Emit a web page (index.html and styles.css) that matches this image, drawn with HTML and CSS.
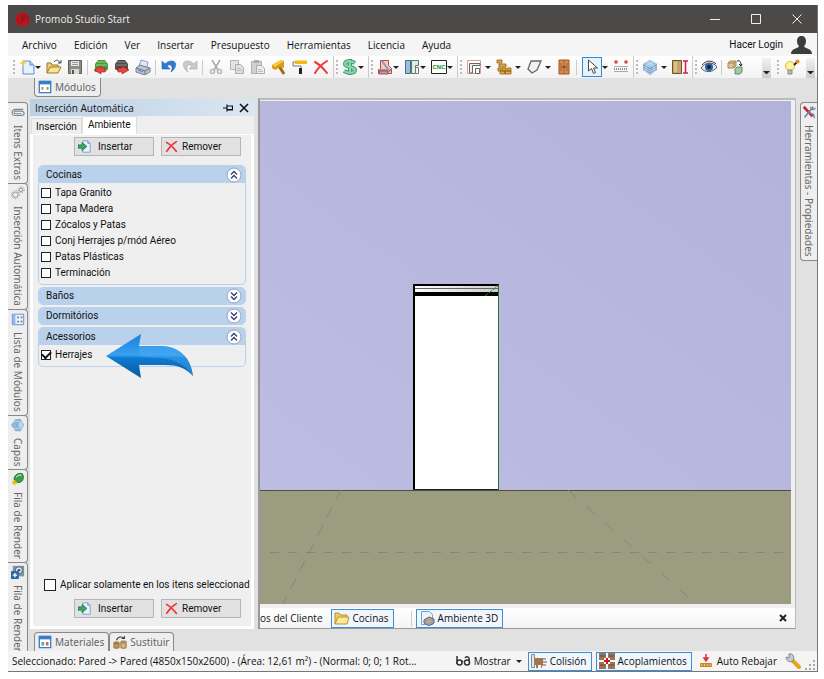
FILE: index.html
```html
<!DOCTYPE html>
<html lang="es">
<head>
    <meta charset="utf-8">
    <title>Promob Studio Start</title>
    <link rel="stylesheet" href="styles.css">
</head>
<body>
    <!-- icons used more than once -->
    <svg width="0" height="0" class="defs" aria-hidden="true">
        <symbol id="i-insert" viewBox="0 0 16 16">
            <path d="M6 1h6l3 3v11H6z" fill="#eaf3fd" stroke="#6f95c4"/>
            <path d="M12 1v3h3" fill="#a8c8ee" stroke="#6f95c4"/>
            <path d="M0 6h5V3l6 5-6 5v-3H0z" fill="#3aa66c" stroke="#1e7a4a"/>
        </symbol>
        <symbol id="i-remove" viewBox="0 0 16 16">
            <path d="M2 3c4 2 8 6 12 11M14 2C9 5 5 9 2 14" fill="none" stroke="#f0343c" stroke-width="2" stroke-linecap="round"/>
        </symbol>
        <symbol id="i-up" viewBox="0 0 16 16">
            <circle cx="8" cy="8" r="7" fill="#fff" stroke="#8fa3c8"/>
            <path d="M5 7.500l3-3 3 3M5 11.500l3-3 3 3" fill="none" stroke="#2c3f78" stroke-width="1.300"/>
        </symbol>
        <symbol id="i-down" viewBox="0 0 16 16">
            <circle cx="8" cy="8" r="7" fill="#fff" stroke="#8fa3c8"/>
            <path d="M5 4.500l3 3 3-3M5 8.500l3 3 3-3" fill="none" stroke="#2c3f78" stroke-width="1.300"/>
        </symbol>
        <symbol id="i-layers" viewBox="0 0 16 16">
            <path d="M1 5l7-4 7 4v6l-7 5-7-5z" fill="#6f9fce"/>
            <path d="M1 5l7-4 7 4-7 4z" fill="#a9c8e6"/>
            <path d="M1 7l7 4 7-4M1 9l7 4 7-4M1 11l7 4 7-4M5 3l7 4v6M11 3L4 7v6" fill="none" stroke="#d4e5f5" stroke-width=".7"/>
        </symbol>
    </svg>

    <div class="window">
        <header class="titlebar">
            <svg class="logo" viewBox="0 0 16 16">
                <circle cx="8" cy="8" r="7.500" fill="#c8101c"/>
                <path d="M7 3c5 0 6 4 3 6-2 1-2 2-3 4-1-4-1-7 0-10z" fill="#8a1a20"/>
                <path d="M4 4c-2 3-1 7 2 9M9 2c4 0 6 5 4 8" fill="none" stroke="#7a1a1e"/>
            </svg>
            <h1 class="title">Promob Studio Start</h1>
            <button class="win-btn" aria-label="Minimizar"><svg viewBox="0 0 10 10"><path d="M0 5.500h10"/></svg></button>
            <button class="win-btn" aria-label="Maximizar"><svg viewBox="0 0 10 10"><path d="M.5 .5h9v9h-9z"/></svg></button>
            <button class="win-btn" aria-label="Cerrar"><svg viewBox="0 0 10 10"><path d="M.5 .5l9 9M9.500 .5l-9 9"/></svg></button>
        </header>

        <nav class="menubar">
            <button>Archivo</button>
            <button>Edición</button>
            <button>Ver</button>
            <button>Insertar</button>
            <button>Presupuesto</button>
            <button>Herramientas</button>
            <button>Licencia</button>
            <button>Ayuda</button>
            <a class="login" href="#">Hacer Login
                <svg viewBox="0 0 21 18"><path d="M6 5c0-7 9-7 9 0 0 3-1 4-2 5 1 3 8 2 8 8H0c0-6 7-5 8-8-1-1-2-2-2-5z" fill="#3c3c3c"/></svg>
            </a>
        </nav>

        <div class="toolbar">
            <div class="group">
                <i class="grip"></i>
                <button class="tool drop" aria-label="Nuevo"><svg viewBox="0 0 16 16"><path d="M4 2h7l4 4v9H4z" fill="#e6f1fd" stroke="#5b8fd0"/><path d="M11 2v4h4" fill="#b5d3f4" stroke="#5b8fd0"/><path d="M4 0l1 3 3 1-3 1-1 3-1-3-3-1 3-1z" fill="#f7cf3c"/></svg></button>
                <button class="tool" aria-label="Abrir"><svg viewBox="0 0 16 16"><path d="M1 14V4h4l1 2h6v3" fill="#f0cf6e" stroke="#9c7a28"/><path d="M1 14l3-6h11l-3 6z" fill="#fbe39a" stroke="#9c7a28"/><path d="M8 3c2-3 5-2 6 1m1-3v3h-3" fill="none" stroke="#444"/></svg></button>
                <button class="tool" aria-label="Guardar"><svg viewBox="0 0 16 16"><path d="M1.500 1.500h13v13h-13z" fill="#8a8d88" stroke="#5c5f5a"/><path d="M4 2h8v5H4z" fill="#e9ece6"/><path d="M5 3.500h6M5 5.500h6" stroke="#999"/><path d="M4 10h8v5H4z" fill="#d8dad6"/><path d="M5 11h2v4H5z" fill="#555"/></svg></button>
                <i class="sep"></i>
                <button class="tool" aria-label="Importar"><svg viewBox="0 0 16 16"><path d="M2 5l3-4h7l3 4v5l-3 3H2z" fill="#4b9a3a"/><path d="M4 3h9M3 6h11" stroke="#9ad486"/><path d="M8 15v-2h4V9H8V7l-7 4z" fill="#e8453c" stroke="#a31d18" stroke-width=".6"/></svg></button>
                <button class="tool" aria-label="Exportar"><svg viewBox="0 0 16 16"><path d="M1 5l3-4h7l3 4v7H4l-3-2z" fill="#4c4c4c"/><path d="M3 3h9M2 6h11" stroke="#8b8b8b"/><path d="M8 15v-2H4V9h4V7l7 4z" fill="#e8453c" stroke="#a31d18" stroke-width=".6"/></svg></button>
                <button class="tool" aria-label="Imprimir"><svg viewBox="0 0 16 16"><path d="M4 7l2-6 7 2-1 5z" fill="#dcebfa" stroke="#8aa3c0"/><path d="M1 9l4-3 10 3v4l-5 3-9-3z" fill="#bcc2cc" stroke="#7b838f"/><path d="M1 9l9 3 5-3M10 12v4" stroke="#6f7783" fill="none"/><path d="M3 11l5 2" stroke="#4d8fd6"/></svg></button>
                <i class="sep"></i>
                <button class="tool" aria-label="Deshacer"><svg viewBox="0 0 16 16"><path d="M1 2v8h8L6 7c3-3 7 0 4 6 6-4 6-11 1-11C8 2 6 3 4 5z" fill="#2e7ad6" stroke="#1d5fb4" stroke-width=".6"/></svg></button>
                <button class="tool" aria-label="Rehacer"><svg viewBox="0 0 16 16"><path d="M15 2v8H7l3-3C7 4 3 7 6 13 0 9 0 2 5 2c3 0 5 1 7 3z" fill="#c9c9c9" stroke="#a8a8a8" stroke-width=".6"/></svg></button>
                <i class="sep"></i>
                <button class="tool" aria-label="Cortar"><svg viewBox="0 0 16 16"><path d="M4 1l6 10M12 1L6 11" stroke="#a9a9a9" stroke-width="1.500"/><circle cx="4.500" cy="12.500" r="2" fill="none" stroke="#b5b5b5" stroke-width="1.500"/><circle cx="11.500" cy="12.500" r="2" fill="none" stroke="#b5b5b5" stroke-width="1.500"/></svg></button>
                <button class="tool" aria-label="Copiar"><svg viewBox="0 0 16 16"><path d="M1.500 1.500h8v9h-8z" fill="#e4e4e4" stroke="#b2b2b2"/><path d="M6.500 5.500h5l3 3v6h-8z" fill="#e0e0e0" stroke="#ababab"/><path d="M8 9.500h4M8 11.500h5" stroke="#bbb"/></svg></button>
                <button class="tool" aria-label="Pegar"><svg viewBox="0 0 16 16"><path d="M1.500 2.500h10v12h-10z" fill="#d0d0d0" stroke="#b0b0b0"/><path d="M4 1h5v3H4z" fill="#aaa"/><path d="M6.500 6.500h5l3 3v5h-8z" fill="#eee" stroke="#ababab"/><path d="M8 10.500h4M8 12.500h5" stroke="#bbb"/></svg></button>
                <button class="tool" aria-label="Pincel"><svg viewBox="0 0 16 16"><path d="M8 7l5 8" stroke="#9b6a1a" stroke-width="3"/><path d="M1 6l9-5 3 1v7L9 8l-5 3-3-2z" fill="#d99a14"/><path d="M1 6l9-5 3 1-9 6z" fill="#f8ca48"/></svg></button>
                <button class="tool" aria-label="Rodillo"><svg viewBox="0 0 16 16"><path d="M3 1h12v4H3z" fill="#f2b91c"/><path d="M3 1h12v1H3z" fill="#fbdc74"/><path d="M3 3H1v4h8v3" fill="none" stroke="#777"/><path d="M7 9h3v6H7z" fill="#222"/></svg></button>
                <button class="tool" aria-label="Eliminar"><svg viewBox="0 0 16 16"><use href="#i-remove"/></svg></button>
            </div>
            <div class="group">
                <i class="grip"></i>
                <button class="tool drop" aria-label="Presupuesto"><svg viewBox="0 0 16 16"><path d="M13 4C10 2 3 1 3 5c0 4 10 2 10 6 0 4-8 3-11 1M8 0v16" fill="none" stroke="#3f9f72" stroke-width="4"/><path d="M13 4C10 2 3 1 3 5c0 4 10 2 10 6 0 4-8 3-11 1M8 1v14" fill="none" stroke="#8fd4ae" stroke-width="2"/></svg></button>
            </div>
            <div class="group">
                <i class="grip"></i>
                <button class="tool drop" aria-label="Corte"><svg viewBox="0 0 16 16"><path d="M3.500 1.500h8v5l3 3v5h-13v-4h2z" fill="#f3c9c6" stroke="#b5484c"/><path d="M5 2l8 11M2 11h12" stroke="#999" stroke-width="2"/><path d="M2 12h9v3H2z" fill="#c98" stroke="#934" stroke-width=".8"/></svg></button>
                <button class="tool drop" aria-label="Planos"><svg viewBox="0 0 16 16"><path d="M1.500 1.500h5v13h-5z" fill="#9dbde0" stroke="#4d6789"/><path d="M7.500 1.500h7v5h-3v8h-4z" fill="#dff0e2" stroke="#4e7f5c"/><path d="M11.500 8.500h3v6h-3z" fill="#f5f5f5" stroke="#777"/></svg></button>
                <button class="tool drop" aria-label="CNC"><svg viewBox="0 0 16 16"><path d="M.5 1.500h15v13H.5z" fill="#fff" stroke="#222"/><text x="8" y="10" class="cnc">CNC</text></svg></button>
            </div>
            <div class="group">
                <i class="grip"></i>
                <button class="tool drop wide" aria-label="Paredes"><svg viewBox="0 0 16 16"><path d="M1.500 1.500h13v13h-13z" fill="#fff" stroke="#e39a94"/><path d="M3.500 14V4.500H14v2H6.500V14z" fill="#eee" stroke="#666"/><path d="M9.500 9.500h4v5h-4z" fill="#fff" stroke="#666"/></svg></button>
                <button class="tool drop wide" aria-label="Ladrillos"><svg viewBox="0 0 16 16"><g fill="#e5ab40" stroke="#8e5f16" stroke-width=".8"><path d="M1 1h5v3H1zM3 5h7v3H3zM6 9h4v3H6zM11 9h4v3h-4zM2 9h3v3H2zM4 12h5v3H4zM9 12h6v3H9z"/></g></svg></button>
                <button class="tool drop wide" aria-label="Piso"><svg viewBox="0 0 16 16"><path d="M5 2h10l-4 9-5 3-4-4z" fill="#f2f2f2" stroke="#666" stroke-width="1.300"/></svg></button>
                <button class="tool" aria-label="Puerta"><svg viewBox="0 0 16 16"><path d="M3 1h10v14H3z" fill="#d98c50" stroke="#9c5523"/><path d="M8 1v14M5 4v8M11 4v8" stroke="#a55f2b"/><path d="M6 8h4" stroke="#5c2f10"/></svg></button>
                <i class="sep"></i>
                <button class="tool drop active" aria-label="Seleccionar"><svg viewBox="0 0 16 16"><path d="M4.500 1v11l3-2.500 2 5 2-1-2-4.500h4z" fill="#fff" stroke="#444"/></svg></button>
                <button class="tool" aria-label="Medir"><svg viewBox="0 0 16 16"><circle cx="3" cy="3" r="1.800" fill="#d7474a"/><circle cx="13" cy="3" r="1.800" fill="#d7474a"/><path d="M1 7.500h14M1 12.500h14" stroke="#aaa"/><path d="M1 10h14" stroke="#888" stroke-width="2" stroke-dasharray="1 1"/></svg></button>
            </div>
            <div class="group">
                <i class="grip"></i>
                <button class="tool drop wide" aria-label="Capas"><svg viewBox="0 0 16 16"><use href="#i-layers"/></svg></button>
                <button class="tool" aria-label="Altura"><svg viewBox="0 0 16 16"><path d="M.5 1.500h9v13h-9z" fill="#c5a36c" stroke="#6d5227"/><path d="M2 3h3v10H2z" fill="#ddc08d"/><path d="M11 2h5M11 14h5M13.500 2v12" stroke="#e0184e" stroke-width="1.500"/></svg></button>
            </div>
            <div class="group grow">
                <i class="grip"></i>
                <button class="tool" aria-label="Vista"><svg viewBox="0 0 16 16"><path d="M0 9c4-6 12-7 16-1-4 6-12 6-16 1z" fill="#dfe8f2" stroke="#55606e"/><circle cx="8" cy="8" r="4" fill="#2d5f9e"/><circle cx="8" cy="8" r="1.800" fill="#0d1c30"/><path d="M1 6c4-5 10-5 14-1" fill="none" stroke="#333"/></svg></button>
                <i class="sep"></i>
                <button class="tool" aria-label="Reemplazar"><svg viewBox="0 0 16 16"><path d="M1 4l2-2h6v5L7 9H1z" fill="#e3c48e" stroke="#a88650"/><path d="M1 4h6v5M7 4l2-2" fill="none" stroke="#a88650"/><path d="M8 10l2-2h5v5l-2 2H8z" fill="#9ccca6" stroke="#5d9269"/><path d="M10 2c3-1 4 1 4 4m-2-1l2 2 1-2" fill="none" stroke="#222"/></svg></button>
                <button class="overflow" aria-label="Más"></button>
            </div>
            <div class="group">
                <i class="grip"></i>
                <button class="tool" aria-label="Luz"><svg viewBox="0 0 16 16"><circle cx="6" cy="7" r="4.500" fill="#fdf3a0" stroke="#d6ba2e"/><path d="M4 11h4v4H4z" fill="#bbb" stroke="#888"/><path d="M10 6l4-4" stroke="#222" stroke-width="2"/><circle cx="13.500" cy="2.500" r="2" fill="#e88a1a"/></svg></button>
                <button class="overflow" aria-label="Más"></button>
            </div>
        </div>

        <main class="workspace">
            <nav class="rail left">
                <button class="side-tab"><svg viewBox="0 0 16 16"><path d="M14 5H5c-5 0-5 7 0 7h7c4 0 4-5 0-5H5c-2 0-2 3 0 3h7" fill="none" stroke="#7b8593" stroke-width="1.200"/></svg>Itens Extras</button>
                <button class="side-tab"><svg viewBox="0 0 16 16"><g fill="none" stroke="#8d8d8d"><circle cx="5" cy="10" r="3"/><circle cx="5" cy="10" r="4.500" stroke-dasharray="1.500 1.500"/><circle cx="11.500" cy="4.500" r="2"/><circle cx="11.500" cy="4.500" r="3.500" stroke-dasharray="1.500 1.500"/></g></svg>Inserción Automática</button>
                <button class="side-tab"><svg viewBox="0 0 16 16"><path d="M1.500 2.500h13v12h-13z" fill="#eaf2fc" stroke="#5b86c0"/><path d="M2 3h3v11H2z" fill="#8db7e6"/><path d="M7 5h2v2H7zM11 5h2v2h-2zM7 10h2v2H7zM11 10h2v2h-2z" fill="#6a7fa0"/></svg>Lista de Módulos</button>
                <button class="side-tab"><svg class="turn" viewBox="0 0 16 16"><use href="#i-layers"/></svg>Capas</button>
                <button class="side-tab"><svg viewBox="0 0 16 16"><path d="M4 11C2 5 7 0 13 2c3 5 0 11-6 10z" fill="#3b9c4a" stroke="#23702f"/><path d="M6 6c2-3 4-3 6-2" stroke="#a5dfa8" stroke-width="1.500" fill="none"/><path d="M4 9v6M1 12h6" stroke="#e9b91b" stroke-width="2"/></svg>Fila de Render</button>
                <button class="side-tab"><svg viewBox="0 0 16 16"><path d="M2 1h13v12H2z" fill="#7c93a3"/><circle cx="9" cy="6" r="4" fill="#dfe7ec" stroke="#455968"/><circle cx="9" cy="6" r="1.500" fill="#34495c"/><path d="M0 7h9v9H0z" fill="#2a67ac"/><path d="M4.500 9v5M2 11.500h5" stroke="#fff" stroke-width="1.500"/></svg>Fila de Render</button>
            </nav>

            <div class="center">
                <div class="tabs top">
                    <button class="dock-tab"><svg viewBox="0 0 16 16"><path d="M1.500 1.500h13v13h-13z" fill="#fff" stroke="#3a7ecb" stroke-width="1.500"/><path d="M1 1h14v4H1z" fill="#3a7ecb"/><path d="M4 8h2v3H4zM10 8h2v3h-2z" fill="#a08a4a"/></svg>Módulos</button>
                </div>

                <div class="docks">
                    <section class="panel">
                        <header class="panel-head">
                            <h2>Inserción Automática</h2>
                            <button aria-label="Fijar"><svg viewBox="0 0 10 10"><path d="M0 5h4M4 1.500v7M4 3h5.500v4H4M4 6.500h5.500" fill="none" stroke="#111" stroke-width="1.200"/></svg></button>
                            <button aria-label="Cerrar"><svg viewBox="0 0 10 10"><path d="M1 1l8 8M9 1L1 9" stroke="#111" stroke-width="1.600"/></svg></button>
                        </header>
                        <div class="panel-tabs">
                            <button>Inserción</button>
                            <button class="selected">Ambiente</button>
                        </div>
                        <div class="panel-body">
                            <div class="actions">
                                <button class="insert"><svg viewBox="0 0 16 16"><use href="#i-insert"/></svg>Insertar</button>
                                <button><svg viewBox="0 0 16 16"><use href="#i-remove"/></svg>Remover</button>
                            </div>

                            <div class="cats">
                                <section class="cat">
                                    <button class="cat-head">Cocinas<svg><use href="#i-up"/></svg></button>
                                    <div class="cat-items">
                                        <label><input type="checkbox">Tapa Granito</label>
                                        <label><input type="checkbox">Tapa Madera</label>
                                        <label><input type="checkbox">Zócalos y Patas</label>
                                        <label><input type="checkbox">Conj Herrajes p/mód Aéreo</label>
                                        <label><input type="checkbox">Patas Plásticas</label>
                                        <label><input type="checkbox">Terminación</label>
                                    </div>
                                </section>
                                <section class="cat closed">
                                    <button class="cat-head">Baños<svg><use href="#i-down"/></svg></button>
                                </section>
                                <section class="cat closed">
                                    <button class="cat-head">Dormitórios<svg><use href="#i-down"/></svg></button>
                                </section>
                                <section class="cat">
                                    <button class="cat-head">Acessorios<svg><use href="#i-up"/></svg></button>
                                    <div class="cat-items">
                                        <label><input type="checkbox" checked>Herrajes</label>
                                    </div>
                                    <svg class="pointer" viewBox="0 0 88 44">
                                        <defs>
                                            <linearGradient id="blue" x1="0" y1="0" x2="0" y2="1">
                                                <stop offset="0" stop-color="#1583dc"/>
                                                <stop offset=".48" stop-color="#3a9ff0"/>
                                                <stop offset=".54" stop-color="#0f7bd2"/>
                                                <stop offset="1" stop-color="#07599f"/>
                                            </linearGradient>
                                        </defs>
                                        <path d="M0 22L35 0l-2 12h23c18 1 29 12 31 30-7-8-16-11-28-11H33l2 13z" fill="url(#blue)"/>
                                        <path d="M56 12c18 1 29 12 31 30-6-9-18-18-34-18-9 0-14-1-20-2V12z" fill="#4badf5" opacity=".45"/>
                                    </svg>
                                </section>
                            </div>

                            <label class="only-selected"><input type="checkbox">Aplicar solamente en los itens seleccionad</label>
                            <div class="actions">
                                <button class="insert"><svg viewBox="0 0 16 16"><use href="#i-insert"/></svg>Insertar</button>
                                <button><svg viewBox="0 0 16 16"><use href="#i-remove"/></svg>Remover</button>
                            </div>
                        </div>
                    </section>

                    <section class="viewport">
                        <div class="scene">
                            <svg viewBox="0 0 531 503" preserveAspectRatio="xMidYMid slice">
                                <defs>
                                    <linearGradient id="wall" x1="0" y1="1" x2="1" y2="0">
                                        <stop offset="0" stop-color="#bdbde4"/>
                                        <stop offset="1" stop-color="#b3b3da"/>
                                    </linearGradient>
                                    <linearGradient id="top" x1="0" x2="1">
                                        <stop offset="0" stop-color="#fff"/>
                                        <stop offset="1" stop-color="#ccc"/>
                                    </linearGradient>
                                </defs>
                                <rect width="531" height="389" fill="url(#wall)"/>
                                <rect y="389" width="531" height="114" fill="#9c9c81"/>
                                <path d="M0 389.500h531" stroke="#4e4e3a"/>
                                <g fill="none" stroke="#858580">
                                    <path d="M10 451.500h513" stroke-dasharray="9 9"/>
                                    <path d="M81 389L23 503" stroke-dasharray="11 9"/>
                                    <path d="M308 389l128 114" stroke-dasharray="11 14"/>
                                </g>
                                <rect x="153" y="183" width="86" height="206" fill="#fff"/>
                                <rect x="154" y="185" width="84" height="7" fill="url(#top)"/>
                                <path d="M153 184h86" stroke="#000" stroke-width="2"/>
                                <path d="M154 187.500h84" stroke="#666"/>
                                <path d="M153 193h86" stroke="#000" stroke-width="4"/>
                                <path d="M154 183v206" stroke="#000" stroke-width="2"/>
                                <path d="M153 388.500h86" stroke="#222"/>
                                <path d="M238.500 184v205" stroke="#1c7a26"/>
                                <path d="M225 195l14-11" stroke="#1c8a2a" stroke-dasharray="4 1"/>
                            </svg>
                        </div>
                        <div class="view-tabs">
                            <button class="cut">os del Cliente</button>
                            <button class="on"><svg viewBox="0 0 16 16"><path d="M1 14V3h4l1 2h7v3" fill="#f3cf62" stroke="#b8902e"/><path d="M1 14l3-7h11l-2 7z" fill="#fde79b" stroke="#b8902e"/></svg>Cocinas</button>
                            <i class="sep"></i>
                            <button class="on"><svg viewBox="0 0 16 16"><path d="M2.500 1.500h8l3 3v10h-11z" fill="#eaf3fd" stroke="#7f9fc8"/><path d="M5 10l5-3 5 2v4l-5 3-5-3z" fill="#98a4b4" stroke="#5c6878"/><circle cx="10" cy="11" r="2" fill="#dba84c"/></svg>Ambiente 3D</button>
                            <button class="close" aria-label="Cerrar"><svg viewBox="0 0 8 8"><path d="M1 1l6 6M7 1L1 7" stroke="#222" stroke-width="2"/></svg></button>
                        </div>
                    </section>
                </div>

                <div class="tabs bottom">
                    <button class="dock-tab"><svg viewBox="0 0 16 16"><path d="M1.500 1.500h13v13h-13z" fill="#fff" stroke="#3a7ecb" stroke-width="1.500"/><path d="M1 1h14v4H1z" fill="#3a7ecb"/><path d="M4 8h3v4H4z" fill="#58a899"/><path d="M9 8h3v4H9z" fill="#e06058"/></svg>Materiales</button>
                    <button class="dock-tab"><svg viewBox="0 0 16 16"><rect x="1" y="8" width="6" height="7" rx="1" fill="#c19a5e" stroke="#86632f"/><rect x="9" y="7" width="6" height="8" rx="1" fill="#d8b780" stroke="#86632f"/><path d="M2 10h4M10 9h4" stroke="#86632f"/><path d="M4 6c1-4 6-5 9-2m0-3v3h-3" fill="none" stroke="#333" stroke-width="1.200"/></svg>Sustituir</button>
                </div>
            </div>

            <nav class="rail right">
                <button class="side-tab"><svg viewBox="0 0 16 16"><path d="M2 2l10 11" stroke="#c42a35" stroke-width="3"/><path d="M13 2L3 14" stroke="#6c86a8" stroke-width="2"/><path d="M10 2c0 4 5 4 5 1M9 10c4-1 5 1 5 5" fill="none" stroke="#6c86a8" stroke-width="1.500"/></svg>Herramientas - Propiedades</button>
            </nav>
        </main>

        <footer class="statusbar">
            <span class="selection">Seleccionado: Pared -&gt; Pared (4850x150x2600) - (Área: 12,61 m²) - (Normal: 0; 0; 1 Rot...</span>
            <button class="drop"><svg viewBox="0 0 16 16"><path d="M2 3v8m6-2l-1-1M14 8c1-5-3-5-4-3" fill="none" stroke="#333" stroke-width="1.500"/><circle cx="4.500" cy="9.500" r="2.500" fill="#fff" stroke="#333" stroke-width="1.500"/><circle cx="12" cy="9.500" r="2.500" fill="#fff" stroke="#333" stroke-width="1.500"/></svg>Mostrar</button>
            <button class="on"><svg viewBox="0 0 16 16"><path d="M.5 1.500h3v13h-3z" fill="#e5e5e5" stroke="#8a8a8a"/><path d="M4 5h8v7H4zM5 12h2v3H5zM10 12h1v3h-1z" fill="#a3754f"/><path d="M12 6h3M12 9h4M11 12h4" stroke="#7c5636"/></svg>Colisión</button>
            <button class="on"><svg viewBox="0 0 16 16"><path d="M0 0h7v7H0zM9 0h7v7H9zM0 9h7v7H0zM9 9h7v7H9z" fill="#9b7355"/><path d="M1 3h5M10 3h5M1 12h5M10 12h5" stroke="#6d4a31"/><path d="M5 5h6v6H5z" fill="#fff"/><path d="M8 5v6M5 8h6" stroke="#e01020" stroke-width="2"/></svg>Acoplamientos</button>
            <button><svg viewBox="0 0 16 16"><path d="M8 1v6M6 5l2 3 2-3z" stroke="#d8343a" stroke-width="1.500" fill="#d8343a"/><path d="M2.500 10.500h11v3h-11z" fill="#f4bd62" stroke="#c9832a"/><path d="M5 11v2M8 11v2M11 11v2" stroke="#a86412"/></svg>Auto Rebajar</button>
            <button class="settings" aria-label="Configurar"><svg viewBox="0 0 16 16"><path d="M7 7l7 7" stroke="#e7a51d" stroke-width="4" stroke-linecap="round"/><path d="M1 4l3 1V1c4-1 6 3 4 7-3 2-7 0-7-4z" fill="#c3c9d1" stroke="#7e8792"/></svg></button>
            <svg class="resize" viewBox="0 0 10 10"><path d="M8 0h2v2H8zM8 4h2v2H8zM8 8h2v2H8zM4 4h2v2H4zM4 8h2v2H4zM0 8h2v2H0z" fill="#a8a8a8"/></svg>
        </footer>
    </div>
</body>
</html>
```
FILE: styles.css
```css
* {
    box-sizing: border-box;
}

body {
    margin: 0;
    padding: 5px 6px 7px 8px;
    height: 100vh;
    background: #fff;
    font-family: "Open Sans", "Noto Sans", sans-serif;
    font-size: 10px;
    color: #111;
}

h1, h2 {
    margin: 0;
    font-size: 10px;
    font-weight: normal;
}

button {
    margin: 0;
    padding: 0;
    border: none;
    background: none;
    font: inherit;
    color: inherit;
    white-space: nowrap;
}

svg {
    display: block;
    flex: none;
    width: 16px;
    height: 16px;
}

.defs {
    position: absolute;
    width: 0;
    height: 0;
}

.window {
    display: flex;
    flex-direction: column;
    height: 100%;
    border-right: 1px solid #777;
    border-bottom: 1px solid #777;
    background: #e1e1e1;
    overflow: hidden;
}

/* title bar */
.titlebar {
    display: flex;
    align-items: center;
    flex: none;
    height: 28px;
    padding-left: 7px;
    background: #4b4a48;
    color: #eee;
}

.logo {
    width: 15px;
    height: 15px;
}

.title {
    flex: 1;
    margin-left: 5px;
}

.win-btn {
    display: flex;
    justify-content: center;
    width: 41px;
}

.win-btn svg {
    width: 10px;
    height: 10px;
    fill: none;
    stroke: #eee;
}

/* menu */
.menubar {
    display: flex;
    align-items: center;
    flex: none;
    gap: 17px;
    height: 23px;
    padding: 0 5px 0 14px;
    background: #f5f5f5;
}

.login {
    display: flex;
    align-items: center;
    gap: 8px;
    margin-left: auto;
    font-family: "Roboto", sans-serif;
    color: #111;
    text-decoration: none;
}

.login svg {
    width: 21px;
    height: 18px;
}

/* toolbar */
.toolbar {
    display: flex;
    flex: none;
    height: 22px;
    padding-left: 3px;
    background: linear-gradient(#fff, #f2f2f2);
}

.group {
    display: flex;
    align-items: center;
    gap: 5px;
    padding: 0 4px 0 2px;
    border-right: 1px solid #ccc;
}

.group:last-child {
    gap: 6px;
    padding-right: 2px;
    border: none;
}

.grow {
    flex: 1;
    border: none;
}

.grip {
    width: 2px;
    height: 14px;
    margin-right: -1px;
    background: repeating-linear-gradient(#bbb 0 2px, transparent 2px 4px);
}

.sep {
    width: 1px;
    height: 15px;
    margin-left: -1px;
    background: #ccc;
}

.tool {
    display: flex;
    align-items: center;
}

.drop::after {
    content: "";
    border: 3px solid transparent;
    border-top-color: #222;
    border-bottom: none;
}

.drop.wide::after {
    margin-left: 3px;
}

.tool.active svg {
    width: 20px;
    height: 20px;
    padding: 1px;
    border: 1px solid #2f8ad8;
    background: #e8f2fb;
}

.cnc {
    font: bold 6px "Liberation Sans", sans-serif;
    fill: #168a26;
    text-anchor: middle;
}

.overflow {
    align-self: flex-end;
    width: 9px;
    height: 20px;
    margin-left: auto;
    padding: 8px 1px 0;
    background: linear-gradient(#f2f2f2, #ccc);
}

.overflow::after {
    content: "";
    display: block;
    border: 3px solid transparent;
    border-top-color: #222;
    border-bottom: none;
}

/* docking area */
.workspace {
    display: flex;
    flex: 1;
    min-height: 0;
}

.rail {
    flex: none;
    width: 20px;
    padding-top: 24px;
    overflow: hidden;
}

.rail.right {
    width: 17px;
}

.side-tab {
    display: flex;
    align-items: center;
    gap: 6px;
    width: 100%;
    padding: 2px 0 3px;
    border: 1px solid #888;
    border-left: none;
    border-radius: 0 4px 4px 0;
    background: #eee;
    font-family: "Noto Sans", sans-serif;
    line-height: 14px;
    color: #666;
    writing-mode: vertical-rl;
}

.side-tab + .side-tab {
    margin-top: -1px;
}

.side-tab svg {
    width: 14px;
    height: 14px;
}

.turn {
    transform: rotate(90deg);
}

.right .side-tab {
    border: 1px solid #888;
    border-right: none;
    border-radius: 4px 0 0 4px;
}

.center {
    display: flex;
    flex-direction: column;
    flex: 1;
    min-width: 0;
    padding-left: 2px;
}

.tabs {
    display: flex;
    flex: none;
    padding-left: 4px;
}

.dock-tab {
    display: flex;
    align-items: center;
    gap: 3px;
    height: 19px;
    padding: 0 4px 0 3px;
    border: 1px solid #888;
    background: #eee;
    font-family: "Noto Sans", sans-serif;
    color: #666;
}

.dock-tab svg {
    width: 14px;
    height: 14px;
}

.top .dock-tab {
    border-top: none;
    border-radius: 0 0 4px 4px;
}

.bottom {
    padding-top: 3px;
}

.bottom .dock-tab {
    border-bottom: none;
    border-radius: 4px 4px 0 0;
}

.docks {
    display: flex;
    flex: 1;
    gap: 4px;
    min-height: 0;
    padding: 1px 4px 0 0;
}

/* tool panel */
.panel {
    display: flex;
    flex-direction: column;
    flex: none;
    width: 224px;
    margin-top: 1px;
    background: #efefef;
    font-family: "Roboto", "Liberation Sans", sans-serif;
    line-height: 14px;
}

.panel-head {
    display: flex;
    align-items: center;
    gap: 6px;
    height: 17px;
    padding: 0 5px;
    background: linear-gradient(90deg, #bcd0e4, #dae6f2);
    font-family: "Open Sans", sans-serif;
}

.panel-head h2 {
    flex: 1;
}

.panel-head svg {
    width: 10px;
    height: 10px;
}

.panel-tabs {
    display: flex;
    align-items: flex-end;
    height: 18px;
    padding-left: 1px;
}

.panel-tabs button {
    height: 16px;
    padding: 0 4px;
    border: 1px solid #ddd;
    border-bottom: none;
}

.panel-tabs .selected {
    height: 18px;
    padding: 0 5px 1px;
    background: #fff;
}

.panel-body {
    display: flex;
    flex-direction: column;
    flex: 1;
    min-height: 0;
    padding: 2px 5px 8px;
    border: 3px solid #fff;
    border-top-width: 1px;
}

.actions {
    display: flex;
    justify-content: flex-end;
    gap: 7px;
    padding-right: 5px;
}

.actions button {
    display: flex;
    align-items: center;
    gap: 4px;
    width: 80px;
    height: 19px;
    padding-left: 3px;
    border: 1px solid #b5b5b5;
    background: #e1e1e1;
}

.actions .insert {
    gap: 7px;
}

.actions svg {
    width: 13px;
    height: 13px;
}

.cats {
    display: flex;
    flex-direction: column;
    flex: 1;
    gap: 2px;
    padding-top: 9px;
}

.cat {
    position: relative;
    border: 1px solid #b9d1ea;
    border-radius: 5px;
}

.cat-head {
    display: flex;
    align-items: center;
    justify-content: space-between;
    width: 100%;
    height: 17px;
    padding: 0 3px 0 7px;
    border-radius: 4px 4px 0 0;
    background: #b9d1ea;
}

.closed .cat-head {
    height: 16px;
    border-radius: 4px;
}

.cat-items {
    padding: 2px 2px 3px;
}

.cat-items label {
    display: flex;
    align-items: center;
    gap: 4px;
    height: 16px;
}

input[type="checkbox"] {
    appearance: none;
    flex: none;
    width: 10px;
    height: 10px;
    margin: 0;
    border: 1px solid #222;
    background: #fff;
}

input[type="checkbox"]:checked::before {
    content: "";
    display: block;
    width: 7px;
    height: 4px;
    border: solid #111;
    border-width: 0 0 2px 2px;
    transform: rotate(-45deg);
}

.pointer {
    position: absolute;
    left: 67px;
    top: 6px;
    width: 88px;
    height: 44px;
}

.only-selected {
    display: flex;
    align-items: center;
    gap: 4px;
    padding: 0 0 7px 6px;
    white-space: nowrap;
}

.only-selected input[type="checkbox"] {
    width: 12px;
    height: 12px;
}

/* 3D view */
.viewport {
    display: flex;
    flex-direction: column;
    flex: 1;
    min-width: 0;
    border: 2px solid #999;
    border-right: 1px solid #bbb;
    border-bottom: 1px solid #999;
    border-top-color: #bbb;
    background: #f0f0f0;
}

.scene {
    flex: 1;
    min-height: 0;
    margin: 1px 4px 4px 0;
}

.scene svg {
    width: 100%;
    height: 100%;
}

.view-tabs {
    display: flex;
    align-items: center;
    flex: none;
    gap: 8px;
    height: 20px;
    padding-right: 8px;
    background: linear-gradient(#fff, #f4f4f4);
}

.view-tabs .sep {
    margin: 0 -4px 0 9px;
}

.on {
    border: 1px solid #3b8fd8;
    background: #f0f6fc;
}

.view-tabs .on,
.statusbar button {
    display: flex;
    align-items: center;
    gap: 3px;
    height: 19px;
    padding: 0 4px 0 2px;
}

.close {
    margin-left: auto;
}

.close svg {
    width: 8px;
    height: 8px;
}

/* status bar */
.statusbar {
    display: flex;
    align-items: center;
    flex: none;
    gap: 4px;
    height: 20px;
    padding: 0 2px 0 4px;
    background: #f4f4f4;
}

.selection {
    flex: 1;
    min-width: 0;
    overflow: hidden;
    white-space: nowrap;
}

.statusbar .drop {
    padding-right: 2px;
}

.statusbar .drop::after {
    margin-left: 2px;
}

.statusbar .settings {
    padding: 0;
}

.statusbar .resize {
    align-self: flex-end;
    width: 10px;
    height: 12px;
}
```
